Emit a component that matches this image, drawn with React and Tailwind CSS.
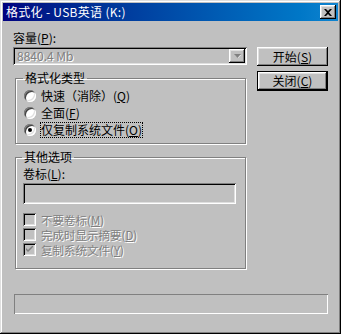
import React from "react";

const raised =
  "shadow-[inset_-1px_-1px_#000,inset_1px_1px_#fff,inset_-2px_-2px_#808080,inset_2px_2px_#dfdfdf]";
const sunken =
  "shadow-[inset_1px_1px_#808080,inset_-1px_-1px_#fff,inset_2px_2px_#000,inset_-2px_-2px_#dfdfdf]";
const disabledText = "text-[#808080] [text-shadow:1px_1px_#fff]";

function Radio({ checked, label, focused }) {
  return (
    <div className="flex items-center h-[17px] gap-[4px]">
      <div className="w-[12px] h-[12px] rounded-full bg-white shadow-[inset_1px_1px_#808080,inset_-1px_-1px_#fff,inset_2px_2px_#404040,inset_-2px_-2px_#dfdfdf] flex items-center justify-center">
        {checked && <div className="w-[4px] h-[4px] rounded-full bg-black" />}
      </div>
      <span
        className={
          "leading-[12px] py-[1px] border " +
          (focused ? "border-dotted border-black" : "border-transparent")
        }
      >
        {label}
      </span>
    </div>
  );
}

function Check({ checked, label }) {
  return (
    <div className="flex items-center h-[15px] gap-[5px]">
      <div className={"w-[13px] h-[13px] bg-[#c0c0c0] flex items-center justify-center " + sunken}>
        {checked && (
          <svg width="7" height="7" viewBox="0 0 7 7">
            <path d="M0 2 L0 4 L2 6 L7 1 L7 -1 L2 4 Z" fill="#808080" />
          </svg>
        )}
      </div>
      <span className={"text-[11.5px] leading-[12px] " + disabledText}>{label}</span>
    </div>
  );
}

function Button({ children, isDefault }) {
  return (
    <div
      className={
        "w-[71px] flex items-center justify-center bg-[#c0c0c0] leading-[12px] " +
        (isDefault ? "h-[20px] border border-black " + raised : "h-[19px] " + raised)
      }
    >
      {children}
    </div>
  );
}

export default function App() {
  return (
    <div className="w-[341px] h-[334px] bg-[#c0c0c0] p-[3px] flex flex-col text-[12px] text-black font-['Noto_Sans_CJK_SC','Noto_Sans',sans-serif] shadow-[inset_-1px_-1px_#000,inset_1px_1px_#dfdfdf,inset_-2px_-2px_#808080,inset_2px_2px_#fff]">
      {/* title bar */}
      <div className="h-[18px] flex items-center justify-between pl-[3px] pr-[2px] bg-gradient-to-r from-[#000080] to-[#1084d0]">
        <span className="text-white leading-[12px] tracking-[0.3px]">格式化 - USB英语 (K:)</span>
        <div className={"w-[16px] h-[14px] bg-[#c0c0c0] flex items-center justify-center " + raised}>
          <svg width="8" height="7" viewBox="0 0 8 7">
            <path d="M0 0h2l2 2 2-2h2L5 3.5 8 7H6L4 5 2 7H0l3-3.5z" fill="#000" />
          </svg>
        </div>
      </div>

      <div className="flex-1 flex flex-col px-[10px]">
        <div className="flex gap-[10px]">
          {/* left column */}
          <div className="w-[234px] flex flex-col pt-[11px]">
            <div className="leading-[12px] h-[12px]">
              容量(<u>P</u>):
            </div>
            <div className={"mt-[3px] h-[18px] bg-[#c0c0c0] flex items-center justify-between pl-[4px] pr-[2px] " + sunken}>
              <span className={"leading-[12px] " + disabledText}>8840.4 Mb</span>
              <div className={"w-[16px] h-[14px] bg-[#c0c0c0] flex items-center justify-center " + raised}>
                <svg width="7" height="5" viewBox="0 0 7 5">
                  <path d="M1 1h6L4 4z" fill="#fff" />
                  <path d="M0 0h7L3.5 4z" fill="#808080" />
                </svg>
              </div>
            </div>

            <fieldset className="mt-[7px] ml-[2px] w-[231px] border border-[#808080] shadow-[inset_1px_1px_#fff,1px_1px_#fff] pt-[3px] pb-[5px] pl-[8px]">
              <legend className="ml-[-1px] px-[2px] leading-[12px]">格式化类型</legend>
              <Radio label={<>快速（消除）(<u>Q</u>)</>} />
              <Radio label={<>全面(<u>F</u>)</>} />
              <Radio checked focused label={<>仅复制系统文件(<u>O</u>)</>} />
            </fieldset>

            <fieldset className="mt-[7px] ml-[2px] w-[231px] border border-[#808080] shadow-[inset_1px_1px_#fff,1px_1px_#fff] pt-[5px] pb-[11px] pl-[7px]">
              <legend className="ml-[-1px] px-[2px] leading-[12px]">其他选项</legend>
              <div className="leading-[12px]">
                卷标(<u>L</u>):
              </div>
              <div className={"mt-[3px] w-[213px] h-[21px] bg-[#c0c0c0] " + sunken} />
              <div className="mt-[8px] flex flex-col">
                <Check label={<>不要卷标(<u>M</u>)</>} />
                <Check label={<>完成时显示摘要(<u>D</u>)</>} />
                <Check checked label={<>复制系统文件(<u>Y</u>)</>} />
              </div>
            </fieldset>
          </div>

          {/* right column */}
          <div className="flex flex-col pt-[26px] gap-[5px]">
            <Button>
              开始(<u>S</u>)
            </Button>
            <Button isDefault>
              关闭(<u>C</u>)
            </Button>
          </div>
        </div>

        <div className="mt-[25px] ml-[1px] w-[314px] h-[20px] shadow-[inset_1px_1px_#808080,inset_-1px_-1px_#fff]" />
      </div>
    </div>
  );
}
